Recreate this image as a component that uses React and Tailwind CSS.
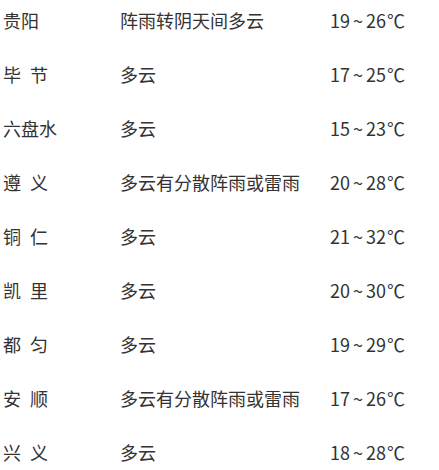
const rows = [
  ["贵阳", "阵雨转阴天间多云", "19", "26"],
  ["毕\u2002节", "多云", "17", "25"],
  ["六盘水", "多云", "15", "23"],
  ["遵\u2002义", "多云有分散阵雨或雷雨", "20", "28"],
  ["铜\u2002仁", "多云", "21", "32"],
  ["凯\u2002里", "多云", "20", "30"],
  ["都\u2002匀", "多云", "19", "29"],
  ["安\u2002顺", "多云有分散阵雨或雷雨", "17", "26"],
  ["兴\u2002义", "多云", "18", "28"],
];

export default function App() {
  return (
    <div className="w-[439px] h-[470px] overflow-hidden bg-white">
      <div
        className="-mt-[7px] text-[18px] text-[#333]"
        style={{ fontFamily: '"Noto Sans CJK SC", "Noto Sans", sans-serif' }}
      >
        {rows.map(([city, weather, low, high]) => (
          <div key={city} className="flex h-[54px] items-center whitespace-pre">
            <div className="w-[120px] pl-[3px]">{city}</div>
            <div className="w-[210px]">{weather}</div>
            <div>
              {low}
              <span className="px-[3px]">~</span>
              {high}
              <span className="pl-[1px]">℃</span>
            </div>
          </div>
        ))}
      </div>
    </div>
  );
}
